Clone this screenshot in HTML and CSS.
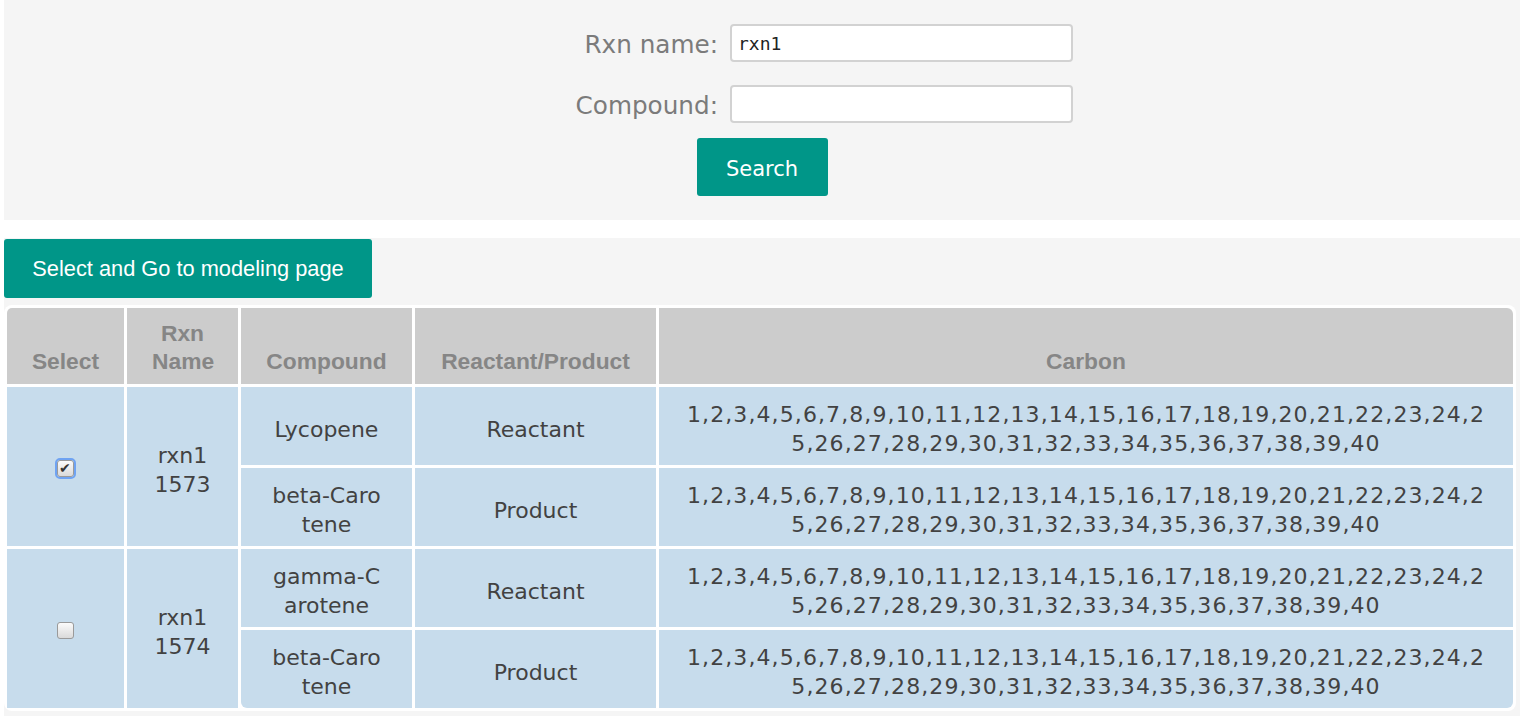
FILE: index.html
```html
<!DOCTYPE html>
<html>
<head>
<meta charset="utf-8">
<link rel="stylesheet" href="styles.css">
</head>
<body>
<section class="search-panel">
  <form class="search-form">
    <label class="lbl" for="rxn">Rxn name:</label>
    <input class="field" id="rxn" type="text" value="rxn1">
    <label class="lbl" for="cmp">Compound:</label>
    <input class="field" id="cmp" type="text" value="">
  </form>
  <div class="search-actions"><button class="btn btn-search" type="button">Search</button></div>
</section>

<section class="results-panel">
  <button class="btn btn-go" type="button">Select and Go to modeling page</button>
  <table class="results">
    <colgroup>
      <col class="w-sel"><col class="w-rxn"><col class="w-cmp"><col class="w-rp"><col class="w-carbon">
    </colgroup>
    <thead>
      <tr>
        <th class="first">Select</th>
        <th class="rxn">Rxn Name</th>
        <th>Compound</th>
        <th>Reactant/Product</th>
        <th class="last">Carbon</th>
      </tr>
    </thead>
    <tbody>
      <tr>
        <td rowspan="2" class="sel"><input class="chk chk-focus" type="checkbox" checked></td>
        <td rowspan="2" class="rxn">rxn11573</td>
        <td class="cmp">Lycopene</td>
        <td>Reactant</td>
        <td class="carbon">1,2,3,4,5,6,7,8,9,10,11,12,13,14,15,16,17,18,19,20,21,22,23,24,25,26,27,28,29,30,31,32,33,34,35,36,37,38,39,40</td>
      </tr>
      <tr>
        <td class="cmp">beta-Carotene</td>
        <td>Product</td>
        <td class="carbon">1,2,3,4,5,6,7,8,9,10,11,12,13,14,15,16,17,18,19,20,21,22,23,24,25,26,27,28,29,30,31,32,33,34,35,36,37,38,39,40</td>
      </tr>
      <tr>
        <td rowspan="2" class="sel first-b"><input class="chk" type="checkbox"></td>
        <td rowspan="2" class="rxn">rxn11574</td>
        <td class="cmp">gamma-Carotene</td>
        <td>Reactant</td>
        <td class="carbon">1,2,3,4,5,6,7,8,9,10,11,12,13,14,15,16,17,18,19,20,21,22,23,24,25,26,27,28,29,30,31,32,33,34,35,36,37,38,39,40</td>
      </tr>
      <tr>
        <td class="cmp round-bl">beta-Carotene</td>
        <td>Product</td>
        <td class="carbon round-br">1,2,3,4,5,6,7,8,9,10,11,12,13,14,15,16,17,18,19,20,21,22,23,24,25,26,27,28,29,30,31,32,33,34,35,36,37,38,39,40</td>
      </tr>
    </tbody>
  </table>
</section>
</body>
</html>
```

FILE: styles.css
```css
html, body {
  margin: 0;
  padding: 0;
  background: #ffffff;
}
body {
  margin: 0 4px;
  font-family: "DejaVu Sans", Verdana, sans-serif;
}

.search-panel {
  background: #f5f5f5;
  padding: 24px 0 24px;
  height: 172px;
}
.search-form {
  width: 622px;
  margin: 0 auto;
  display: grid;
  grid-template-columns: 267px 343px;
  column-gap: 12px;
  row-gap: 23px;
  align-items: center;
}
.lbl {
  text-align: right;
  font-size: 24.7px;
  color: #7b7b7b;
  padding-top: 2px;
}
.field {
  box-sizing: border-box;
  width: 343px;
  height: 38px;
  border: 2px solid #d2d2d2;
  border-radius: 4px;
  background: #fff;
  padding: 0 6px;
  font-family: "DejaVu Sans Mono", monospace;
  font-size: 18px;
  color: #222;
  margin: 0;
}
.search-actions {
  display: flex;
  justify-content: center;
  margin-top: 15px;
}
.btn {
  border: none;
  background: #009688;
  color: #fff;
  border-radius: 3px;
  cursor: pointer;
  margin: 0;
}
.btn-search {
  width: 131px;
  height: 58px;
  font-family: "DejaVu Sans", Verdana, sans-serif;
  font-size: 21px;
  padding: 3px 0 0;
}

.results-panel {
  background: #f5f5f5;
  margin-top: 18px;
  padding: 1px 0 5px;
}
.btn-go {
  display: block;
  width: 368px;
  height: 59px;
  font-family: "Liberation Sans", Arial, sans-serif;
  font-size: 21.8px;
  padding: 0;
}

.results {
  margin-top: 7px;
  width: 1512px;
  table-layout: fixed;
  border-collapse: separate;
  border-spacing: 3px;
  background: #ffffff;
  border-radius: 8px;
}
.w-sel { width: 117px; }
.w-rxn { width: 111px; }
.w-cmp { width: 171px; }
.w-rp { width: 241px; }
.w-carbon { width: 854px; }

.results th {
  background: #cccccc;
  color: #868686;
  font-family: "Liberation Sans", Arial, sans-serif;
  font-weight: bold;
  font-size: 22.8px;
  line-height: 28px;
  padding: 11px 4px 9px;
  vertical-align: bottom;
  text-align: center;
}
.results th.rxn { padding: 11px 25px 9px; }
.results th.first { border-top-left-radius: 5px; }
.results th.last { border-top-right-radius: 6px; }

.results td {
  background: #c7dcec;
  color: #424242;
  font-size: 22px;
  line-height: 29px;
  padding: 13px 4px 7px;
  text-align: center;
  vertical-align: middle;
  word-break: break-all;
}
.results td.rxn { padding: 13px 25px 7px; }
.results td.cmp { padding: 13px 29px 7px; }
.results td.carbon {
  padding: 13px 24px 7px;
  letter-spacing: 1.1px;
}
.results td.sel { padding: 10px 4px; }
.results td.round-bl { border-bottom-left-radius: 6px; }
.results td.round-br { border-bottom-right-radius: 6px; }

.chk {
  appearance: none;
  -webkit-appearance: none;
  box-sizing: border-box;
  width: 17px;
  height: 17px;
  margin: 0;
  border: 1px solid #9a9a9a;
  border-radius: 3px;
  background: linear-gradient(#fbfbfb, #dadada);
  vertical-align: middle;
  position: relative;
  display: inline-block;
}
.chk:checked::after {
  content: "\2714";
  position: absolute;
  left: 1px;
  top: -1px;
  font-size: 14px;
  line-height: 16px;
  color: #333;
}
.chk-focus {
  outline: 2px solid #6fa3f2;
  outline-offset: 0;
}
```
